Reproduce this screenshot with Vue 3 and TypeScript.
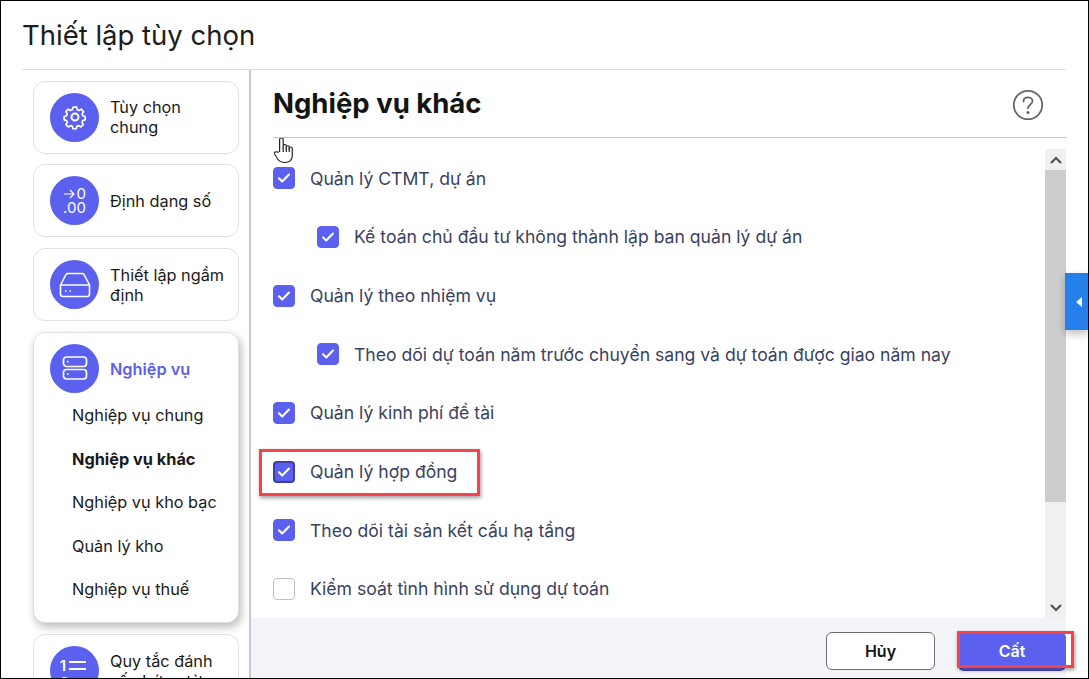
<script setup lang="ts">
interface OptionRow {
  label: string
  checked: boolean
  nested?: boolean
  focused?: boolean
}

const rows: OptionRow[] = [
  { label: 'Quản lý CTMT, dự án', checked: true },
  { label: 'Kế toán chủ đầu tư không thành lập ban quản lý dự án', checked: true, nested: true },
  { label: 'Quản lý theo nhiệm vụ', checked: true },
  { label: 'Theo dõi dự toán năm trước chuyển sang và dự toán được giao năm nay', checked: true, nested: true },
  { label: 'Quản lý kinh phí đề tài', checked: true },
  { label: 'Quản lý hợp đồng', checked: true, focused: true },
  { label: 'Theo dõi tài sản kết cấu hạ tầng', checked: true },
  { label: 'Kiểm soát tình hình sử dụng dự toán', checked: false },
]

const subItems = ['Nghiệp vụ chung', 'Nghiệp vụ khác', 'Nghiệp vụ kho bạc', 'Quản lý kho', 'Nghiệp vụ thuế']
</script>

<template>
  <div class="frame">
    <header class="top">Thiết lập tùy chọn</header>

    <div class="body">
      <aside class="side">
        <div class="card">
          <div class="head first">
            <span class="circle">
              <svg width="28" height="28" viewBox="0 0 24 24" fill="none" stroke="#fff" stroke-width="1.7" stroke-linejoin="round">
                <circle cx="12" cy="12" r="3" />
                <path d="M10.3 2.500h3.400l.5 2.600 1.700.8 2.300-1.300 2.300 2.500-1.400 2.200.6 1.800 2.400.8v3.300l-2.400.7-.7 1.800 1.300 2.200-2.400 2.400-2.200-1.300-1.800.7-.6 2.400h-3.300l-.6-2.400-1.800-.7-2.200 1.300-2.400-2.400 1.300-2.200-.7-1.800-2.400-.7v-3.300l2.400-.8.7-1.800-1.400-2.200 2.400-2.500 2.200 1.300 1.800-.8z" transform="translate(12 12) scale(.86) translate(-12 -12.4)" />
              </svg>
            </span>
            <span class="name">Tùy chọn chung</span>
          </div>
        </div>

        <div class="card">
          <div class="head">
            <span class="circle">
              <span class="numfmt">
                <span class="numline">
                  <svg width="11" height="10" viewBox="0 0 11 10" fill="none" stroke="#fff" stroke-width="1.2"><path d="M0 5h10M6 1l4 4-4 4" /></svg>0
                </span>
                <span class="numline">.00</span>
              </span>
            </span>
            <span class="name">Định dạng số</span>
          </div>
        </div>

        <div class="card">
          <div class="head">
            <span class="circle">
              <svg width="32" height="26" viewBox="0 0 32 26" fill="none" stroke="#fff" stroke-width="1.6" stroke-linejoin="round">
                <path d="M1.500 13 7 2.500c.4-.7 1-1 1.700-1h14.600c.7 0 1.300.3 1.700 1L30.500 13v9c0 1.400-1.100 2.500-2.500 2.500H4c-1.400 0-2.500-1.100-2.500-2.500z" />
                <path d="M1.500 13h29" />
                <path d="M6 19h1.500M10.500 19H12" />
              </svg>
            </span>
            <span class="name">Thiết lập ngầm định</span>
          </div>
        </div>

        <div class="card open">
          <div class="head">
            <span class="circle">
              <svg width="26" height="26" viewBox="0 0 26 26" fill="none" stroke="#fff" stroke-width="1.700">
                <rect x="1.500" y="2" width="23" height="9.500" rx="3" />
                <rect x="1.500" y="14.500" width="23" height="9.500" rx="3" />
                <path d="M5 6.700h1.500M5 19.200h1.500" />
              </svg>
            </span>
            <span class="name active">Nghiệp vụ</span>
          </div>
          <ul class="subs">
            <li v-for="(item, i) in subItems" :key="item" :class="{ current: i === 1 }">{{ item }}</li>
          </ul>
        </div>

        <div class="card">
          <div class="head">
            <span class="circle">
              <span class="numlist">
                <span class="listline">1<i></i></span>
                <span class="listline">2<i></i></span>
              </span>
            </span>
            <span class="name">Quy tắc đánh số chứng từ</span>
          </div>
        </div>
      </aside>

      <main class="panel">
        <div class="panel-head">
          <h1>Nghiệp vụ khác</h1>
          <svg class="help" width="32" height="32" viewBox="0 0 32 32" fill="none" stroke="#666" stroke-width="1.800">
            <circle cx="16" cy="16" r="14.200" />
            <path d="M11.500 12.500c0-2.600 2-4.200 4.500-4.200s4.500 1.600 4.500 4c0 3.300-4.500 3.300-4.500 7" stroke-linecap="round" />
            <circle cx="16" cy="23.500" r=".7" fill="#666" />
          </svg>
        </div>

        <div class="content">
          <div class="list">
            <label v-for="row in rows" :key="row.label" class="row" :class="{ nested: row.nested }">
              <span class="box" :class="{ on: row.checked, focused: row.focused }">
                <svg v-if="row.checked" width="14" height="12" viewBox="0 0 14 12" fill="none" stroke="#fff" stroke-width="2" stroke-linecap="round" stroke-linejoin="round">
                  <path d="M2 6.300 5.200 9.500 12 2.500" />
                </svg>
              </span>
              <span class="label">{{ row.label }}</span>
            </label>
          </div>
          <div class="scrollbar">
            <span class="arrow">
              <svg width="12" height="8" viewBox="0 0 12 8" fill="none" stroke="#555" stroke-width="2.200"><path d="M1 7l5-5 5 5" /></svg>
            </span>
            <span class="thumb"></span>
            <span class="rail"></span>
            <span class="arrow">
              <svg width="12" height="8" viewBox="0 0 12 8" fill="none" stroke="#555" stroke-width="2.200"><path d="M1 1l5 5 5-5" /></svg>
            </span>
          </div>
        </div>

        <footer class="foot">
          <button class="btn ghost" type="button">Hủy</button>
          <button class="btn primary" type="button">Cất</button>
        </footer>
      </main>
    </div>

    <!-- chú thích đè lên ảnh chụp -->
    <span class="mark mark-row"></span>
    <span class="mark mark-btn"></span>
    <span class="tab"><i></i></span>
    <svg class="hand" width="20" height="25" viewBox="0.300 1 15 22.500" preserveAspectRatio="none" fill="#fff" stroke="#222" stroke-width=".9" stroke-linejoin="round">
      <path d="M4.500 13V2.500c0-2 2.700-2 2.700 0V10V8c0-1.500 2.300-1.500 2.300 0v2.500-1.500c0-1.400 2.200-1.400 2.200 0v2-1c0-1.300 2.300-1.300 2.300 0.200V17c0 3.500-2 6-5.500 6-3 0-4.300-1.200-5.500-3.200L.8 15.500c-.8-1.700 1.200-2.800 2.300-1.500z" />
      <path d="M7.200 10v3.500M9.500 10v3.500M11.700 10v3.500" />
    </svg>
  </div>
</template>

<style>
html,
body {
  margin: 0;
  overflow: hidden;
}
</style>

<style scoped>
.frame {
  position: relative;
  box-sizing: border-box;
  width: 1089px;
  height: 679px;
  padding: 0 22px 0 21px;
  border: 1px solid #000;
  background: #fff;
  color: #1a1a1a;
  font-family: Inter, "Liberation Sans", sans-serif;
  display: flex;
  flex-direction: column;
  overflow: hidden;
}
.top {
  box-sizing: border-box;
  flex: none;
  height: 69px;
  padding-top: 16px;
  border-bottom: 1px solid #dcdde2;
  font-size: 27.5px;
  line-height: 36px;
  color: #1c1c1c;
}
.body {
  flex: 1;
  min-height: 0;
  display: flex;
}
.side {
  box-sizing: border-box;
  flex: none;
  width: 229px;
  height: 100%;
  padding: 10.8px 10px 0 11px;
  border-right: 2px solid #c4c6d4;
  display: flex;
  flex-direction: column;
  gap: 10.67px;
  overflow: hidden;
}
.card {
  box-sizing: border-box;
  flex: none;
  min-height: 73px;
  padding: 0 12px 0 16px;
  border: 1px solid #dfe0e4;
  border-radius: 12px;
  background: #fff;
}
.card.open {
  height: 291.5px;
  box-shadow: 2px 4px 8px rgba(0, 0, 0, 0.28);
}
.head {
  display: flex;
  align-items: center;
  gap: 11px;
  height: 71px;
}
.circle {
  flex: none;
  width: 49px;
  height: 49px;
  border-radius: 50%;
  background: #5b60ee;
  display: flex;
  align-items: center;
  justify-content: center;
  color: #fff;
  overflow: hidden;
}
.name {
  padding-top: 1px;
  font-size: 16.3px;
  line-height: 20px;
}
.head.first .name {
  padding-top: 0;
}
.name.active {
  padding-top: 2px;
  color: #5b60ee;
  font-weight: 600;
}
.numfmt {
  display: flex;
  flex-direction: column;
  align-items: flex-end;
  font-size: 15px;
  line-height: 14px;
}
.numline {
  display: flex;
  align-items: center;
  gap: 1px;
}
.numlist {
  display: flex;
  flex-direction: column;
  gap: 2px;
  padding-top: 8px;
  font-size: 15px;
  line-height: 15px;
  font-weight: 600;
}
.listline {
  display: flex;
  align-items: center;
  gap: 3px;
}
.listline i {
  display: block;
  width: 17px;
  height: 9px;
  border-top: 2px solid #fff;
  border-bottom: 2px solid #fff;
  box-sizing: border-box;
}
.subs {
  list-style: none;
  margin: -9.4px 0 0;
  padding: 0 0 0 22px;
}
.subs li {
  height: 43.4px;
  line-height: 43.4px;
  font-size: 16.3px;
  white-space: nowrap;
}
.subs li.current {
  font-weight: 700;
}
.panel {
  flex: 1;
  min-width: 0;
  display: flex;
  flex-direction: column;
}
.panel-head {
  box-sizing: border-box;
  flex: none;
  height: 68px;
  margin-left: 22px;
  border-bottom: 1px solid #c4c6d0;
  display: flex;
  align-items: center;
  justify-content: space-between;
}
.panel-head h1 {
  margin: 0 0 2px;
  font-size: 27.5px;
  line-height: 36px;
  font-weight: 700;
  color: #141414;
}
.help {
  margin: 2px 22px 0 0;
}
.content {
  flex: 1;
  min-height: 0;
  padding-top: 11px;
  display: flex;
}
.list {
  flex: 1;
  min-width: 0;
  padding-left: 22px;
}
.row {
  display: flex;
  align-items: center;
  gap: 15px;
  height: 58.7px;
  font-size: 17.6px;
  color: #3a4160;
  white-space: nowrap;
}
.label {
  margin-top: -0.6px;
}
.row.nested {
  padding-left: 44px;
}
.box {
  box-sizing: border-box;
  flex: none;
  width: 22px;
  height: 22px;
  border: 1px solid #b9bccb;
  border-radius: 4px;
  background: #fff;
  display: flex;
  align-items: center;
  justify-content: center;
}
.box.on {
  border-color: #5b60ee;
  background: #5b60ee;
}
.box.focused {
  border: 2px solid #3c3fa6;
}
.scrollbar {
  flex: none;
  width: 21px;
  display: flex;
  flex-direction: column;
  background: #f0f0f0;
}
.arrow {
  flex: none;
  height: 21px;
  display: flex;
  align-items: center;
  justify-content: center;
}
.thumb {
  flex: none;
  height: 332px;
  background: #cdcdcd;
}
.rail {
  flex: 1;
}
.foot {
  flex: none;
  box-sizing: border-box;
  height: 60px;
  padding: 14px 0 0;
  background: #f3f4f8;
  display: flex;
  justify-content: flex-end;
  gap: 23px;
}
.btn {
  box-sizing: border-box;
  width: 109px;
  height: 38px;
  border-radius: 6px;
  font-family: inherit;
  font-size: 16px;
  font-weight: 600;
}
.ghost {
  border: 1px solid #6e6e6e;
  background: #fff;
  color: #141414;
}
.primary {
  width: 108px;
  border: none;
  background: #5b60ee;
  color: #fff;
  box-shadow: 0 1px 0 #4648b8;
}
.mark {
  position: absolute;
  box-sizing: border-box;
  border: 3px solid #f4434b;
  box-shadow: 1px 2px 4px rgba(0, 0, 0, 0.4);
  pointer-events: none;
}
.mark-row {
  left: 258px;
  top: 448px;
  width: 221px;
  height: 47px;
}
.mark-btn {
  left: 956px;
  top: 630px;
  width: 117px;
  height: 37px;
}
.tab {
  position: absolute;
  left: 1064px;
  top: 272px;
  width: 24px;
  height: 57px;
  background: #2680eb;
  box-shadow: 0 4px 8px rgba(0, 0, 0, 0.25);
  display: flex;
  align-items: center;
  justify-content: center;
}
.tab i {
  width: 0;
  height: 0;
  margin-left: 3px;
  border-top: 5px solid transparent;
  border-bottom: 5px solid transparent;
  border-right: 6px solid #fff;
}
.hand {
  position: absolute;
  left: 273px;
  top: 137px;
}
</style>
